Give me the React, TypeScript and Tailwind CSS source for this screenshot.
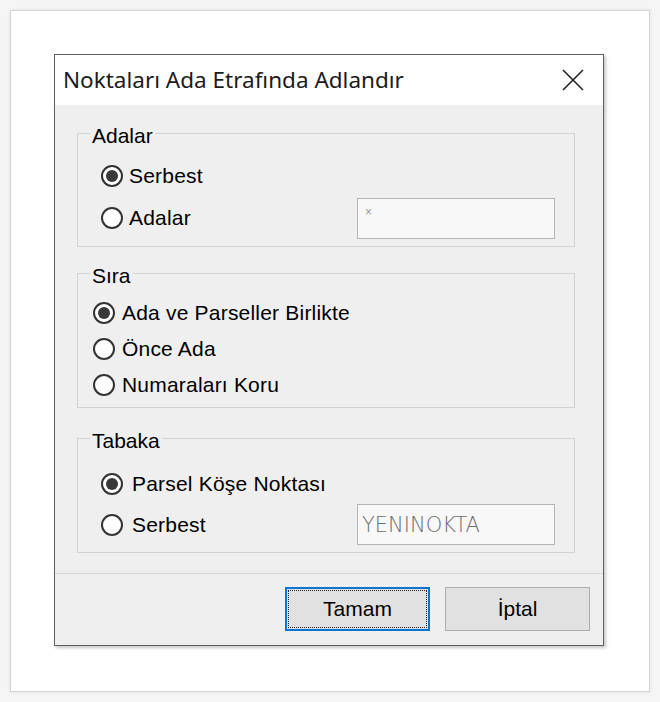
import React from "react";

const body = "font-['Liberation_Sans',Arial,sans-serif]";

function Radio({ checked }: { checked?: boolean }) {
  return (
    <span className="flex h-[22px] w-[22px] shrink-0 items-center justify-center rounded-full border-2 border-[#333333] bg-white">
      {checked && <span className="h-[12px] w-[12px] rounded-full bg-[#3a3a3a]" />}
    </span>
  );
}

function Option({ checked, label, gap }: { checked?: boolean; label: string; gap: string }) {
  return (
    <label className={`flex items-center ${gap}`}>
      <Radio checked={checked} />
      <span className="text-[21px] leading-[24px] tracking-[0.2px] text-black">{label}</span>
    </label>
  );
}

function Group({
  title,
  height,
  className,
  children,
}: {
  title: string;
  height: string;
  className: string;
  children: React.ReactNode;
}) {
  return (
    <div className={`relative border border-[#d2d2d2] ${height} ${className}`}>
      <span className="absolute left-[12px] top-[-10px] bg-[#efefef] px-[2px] text-[21px] leading-[24px] text-black">
        {title}
      </span>
      {children}
    </div>
  );
}

export default function App() {
  return (
    <div className={`h-[702px] w-[660px] bg-[#f5f5f5] p-[10px] ${body}`}>
      <div className="h-[682px] w-[640px] border border-[#d4d4d4] bg-white pl-[43px] pt-[43px] shadow-[0_0_4px_rgba(0,0,0,0.08)]">
        <div className="flex h-[592px] w-[550px] flex-col border border-[#5e5e5e] bg-[#efefef] shadow-[2px_2px_3px_rgba(0,0,0,0.22)]">
          {/* Title bar */}
          <div className="flex h-[50px] items-center justify-between bg-white pl-[8px] pr-[19px]">
            <span className="font-['Noto_Sans',sans-serif] text-[22.5px] leading-[28px] text-[#1b1b1b]">
              Noktaları Ada Etrafında Adlandır
            </span>
            <svg width="22" height="22" viewBox="0 0 22 22" className="shrink-0">
              <path d="M1 1 L21 21 M21 1 L1 21" stroke="#222" strokeWidth="1.6" fill="none" />
            </svg>
          </div>

          {/* Content */}
          <div className="flex h-[468px] flex-col pl-[22px] pr-[28px]">
            <Group title="Adalar" height="h-[114px]" className="mt-[28px] pl-[23px] pr-[19px] pt-[21px]">
              <div className="flex h-[42px] items-center">
                <Option checked label="Serbest" gap="gap-[6px]" />
              </div>
              <div className="flex h-[42px] items-center justify-between">
                <Option label="Adalar" gap="gap-[6px]" />
                <div className="flex h-[41px] w-[198px] items-start border border-[#b4b4b4] bg-[#f8f8f8] pl-[7px] pt-[6px] text-[12px] leading-[14px] text-[#9a9a9a]">
                  ×
                </div>
              </div>
            </Group>

            <Group title="Sıra" height="h-[135px]" className="mt-[26px] pl-[15px] pt-[21px]">
              <div className="flex h-[36px] items-center">
                <Option checked label="Ada ve Parseller Birlikte" gap="gap-[7px]" />
              </div>
              <div className="flex h-[36px] items-center">
                <Option label="Önce Ada" gap="gap-[7px]" />
              </div>
              <div className="flex h-[36px] items-center">
                <Option label="Numaraları Koru" gap="gap-[7px]" />
              </div>
            </Group>

            <Group title="Tabaka" height="h-[115px]" className="mt-[30px] pl-[23px] pr-[19px] pt-[24px]">
              <div className="flex h-[41px] items-center">
                <Option checked label="Parsel Köşe Noktası" gap="gap-[9px]" />
              </div>
              <div className="flex h-[41px] items-center justify-between">
                <Option label="Serbest" gap="gap-[9px]" />
                <div className="flex h-[41px] w-[198px] items-center border border-[#b4b4b4] bg-[#f8f8f8] pl-[4px] font-['DejaVu_Sans',sans-serif] text-[21px] font-extralight leading-[24px] text-[#6e6e6e]">
                  YENINOKTA
                </div>
              </div>
            </Group>
          </div>

          {/* Footer */}
          <div className="flex flex-1 items-start justify-end gap-[15px] border-t border-[#d6d6d6] pr-[13px] pt-[13px]">
            <button className="flex h-[44px] w-[145px] items-center justify-center border-2 border-[#0a74d0] bg-[#e1e1e1] p-[1px]">
              <span className="flex h-full w-full items-center justify-center border border-dotted border-[#222] text-[21px] leading-[24px] text-black">
                Tamam
              </span>
            </button>
            <button className="flex h-[44px] w-[145px] items-center justify-center border border-[#adadad] bg-[#e1e1e1] text-[21px] leading-[24px] text-black">
              İptal
            </button>
          </div>
        </div>
      </div>
    </div>
  );
}
